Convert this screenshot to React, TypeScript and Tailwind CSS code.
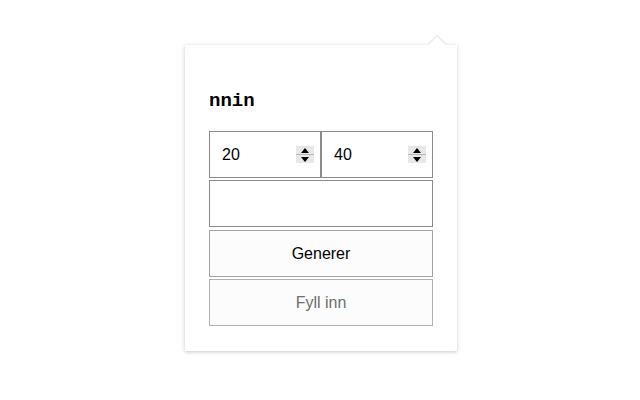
const font = { fontFamily: '"Liberation Sans", Arial, sans-serif' };

function Spinner() {
  return (
    <div className="flex h-[17px] w-[18px] flex-col bg-[#e8e8e8]">
      <div className="flex flex-1 items-center justify-center">
        <svg width="8" height="5" viewBox="0 0 8 5">
          <path d="M4 0 L8 5 L0 5 Z" fill="#000" />
        </svg>
      </div>
      <div className="h-px bg-[#b5b5b5]" />
      <div className="flex flex-1 items-center justify-center">
        <svg width="8" height="5" viewBox="0 0 8 5">
          <path d="M0 0 L8 0 L4 5 Z" fill="#000" />
        </svg>
      </div>
    </div>
  );
}

function NumberField({ value }: { value: string }) {
  return (
    <div className="flex h-[47px] flex-1 items-center justify-between border border-[#8a8a8a] pl-[12px] pr-[6px]">
      <span className="text-[16px] text-black" style={font}>
        {value}
      </span>
      <Spinner />
    </div>
  );
}

export default function App() {
  return (
    <div className="flex h-[400px] w-[640px] justify-center bg-white pl-[2px] pt-[45px]">
      <div className="relative h-[306px] w-[272px] bg-white shadow-[0_1px_4px_rgba(0,0,0,0.22)]">
        {/* notch */}
        <div className="absolute -top-[6px] right-[14px] h-[12px] w-[12px] rotate-45 bg-white shadow-[-1px_-1px_2px_rgba(0,0,0,0.12)]" />
        <div className="relative px-6 pt-[45px]">
          <h1
            className="h-[22px] text-[19px] font-bold leading-[22px] text-black"
            style={{ fontFamily: '"Liberation Mono", "Courier New", monospace' }}
          >
            nnin
          </h1>
          <div className="mt-[19px] flex">
            <NumberField value="20" />
            <NumberField value="40" />
          </div>
          <div className="mt-[2px] h-[47px] border border-[#8a8a8a]" />
          <button
            className="mt-[3px] flex h-[47px] w-full items-center justify-center border border-[#a3a3a3] bg-[#fcfcfc] text-[16px] text-black"
            style={font}
          >
            Generer
          </button>
          <button
            disabled
            className="mt-[2px] flex h-[47px] w-full items-center justify-center border border-[#b0b0b0] bg-[#fcfcfc] text-[16px] text-[#6d6d6d]"
            style={font}
          >
            Fyll inn
          </button>
        </div>
      </div>
    </div>
  );
}
